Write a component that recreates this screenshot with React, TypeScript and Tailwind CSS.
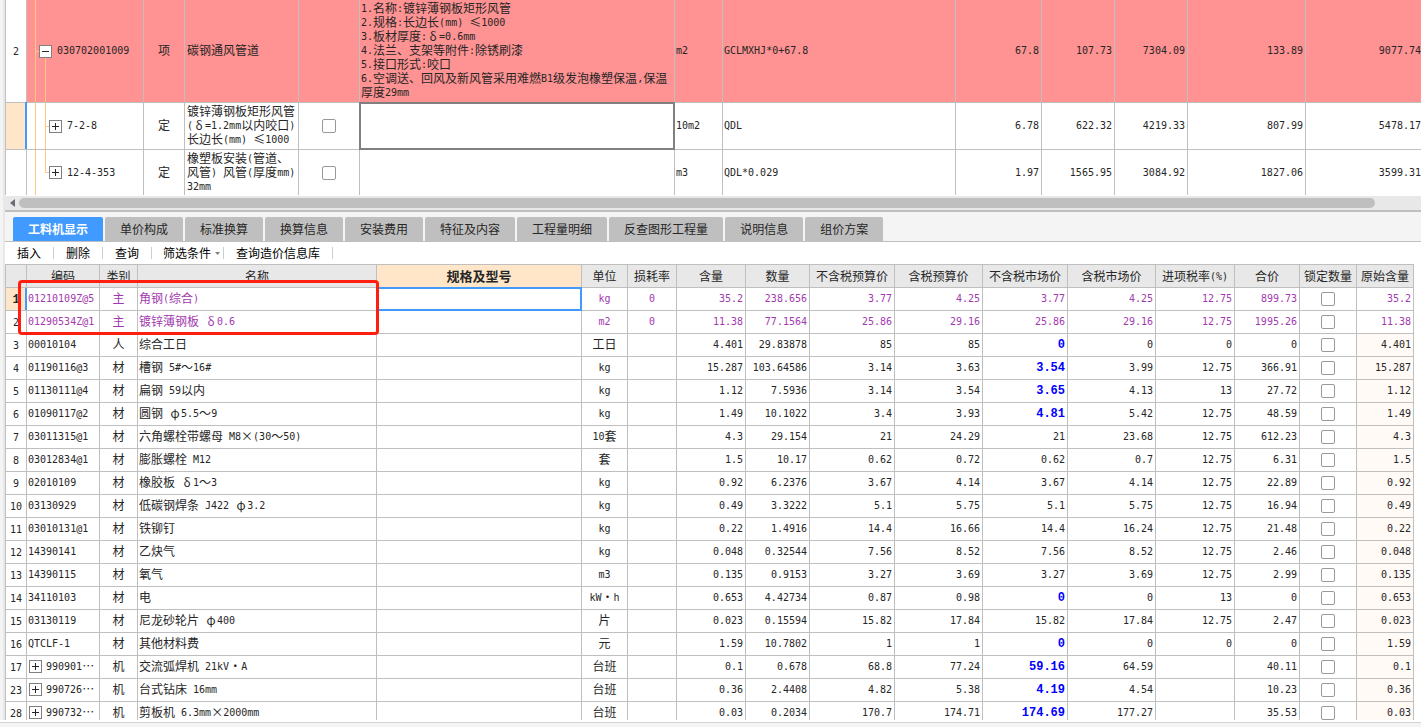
import type { ReactNode } from 'react';
import clsx from 'clsx';

interface Material {
  no: number;
  code: string;
  kind: string;
  name: string;
  unit: string;
  loss?: string;
  // 含量, 数量, 不含税预算价, 含税预算价, 不含税市场价, 含税市场价, 进项税率, 合价, 原始含量
  values: string[];
  main?: boolean;
  adjusted?: boolean;
  group?: boolean;
}

const materials: Material[] = [
  { no: 1, code: '01210109Z@5', kind: '主', name: '角钢(综合)', unit: 'kg', loss: '0', main: true, values: ['35.2', '238.656', '3.77', '4.25', '3.77', '4.25', '12.75', '899.73', '35.2'] },
  { no: 2, code: '01290534Z@1', kind: '主', name: '镀锌薄钢板 δ0.6', unit: 'm2', loss: '0', main: true, values: ['11.38', '77.1564', '25.86', '29.16', '25.86', '29.16', '12.75', '1995.26', '11.38'] },
  { no: 3, code: '00010104', kind: '人', name: '综合工日', unit: '工日', adjusted: true, values: ['4.401', '29.83878', '85', '85', '0', '0', '0', '0', '4.401'] },
  { no: 4, code: '01190116@3', kind: '材', name: '槽钢 5#～16#', unit: 'kg', adjusted: true, values: ['15.287', '103.64586', '3.14', '3.63', '3.54', '3.99', '12.75', '366.91', '15.287'] },
  { no: 5, code: '01130111@4', kind: '材', name: '扁钢 59以内', unit: 'kg', adjusted: true, values: ['1.12', '7.5936', '3.14', '3.54', '3.65', '4.13', '13', '27.72', '1.12'] },
  { no: 6, code: '01090117@2', kind: '材', name: '圆钢 φ5.5～9', unit: 'kg', adjusted: true, values: ['1.49', '10.1022', '3.4', '3.93', '4.81', '5.42', '12.75', '48.59', '1.49'] },
  { no: 7, code: '03011315@1', kind: '材', name: '六角螺栓带螺母 M8×(30～50)', unit: '10套', values: ['4.3', '29.154', '21', '24.29', '21', '23.68', '12.75', '612.23', '4.3'] },
  { no: 8, code: '03012834@1', kind: '材', name: '膨胀螺栓 M12', unit: '套', values: ['1.5', '10.17', '0.62', '0.72', '0.62', '0.7', '12.75', '6.31', '1.5'] },
  { no: 9, code: '02010109', kind: '材', name: '橡胶板 δ1～3', unit: 'kg', values: ['0.92', '6.2376', '3.67', '4.14', '3.67', '4.14', '12.75', '22.89', '0.92'] },
  { no: 10, code: '03130929', kind: '材', name: '低碳钢焊条 J422 φ3.2', unit: 'kg', values: ['0.49', '3.3222', '5.1', '5.75', '5.1', '5.75', '12.75', '16.94', '0.49'] },
  { no: 11, code: '03010131@1', kind: '材', name: '铁铆钉', unit: 'kg', values: ['0.22', '1.4916', '14.4', '16.66', '14.4', '16.24', '12.75', '21.48', '0.22'] },
  { no: 12, code: '14390141', kind: '材', name: '乙炔气', unit: 'kg', values: ['0.048', '0.32544', '7.56', '8.52', '7.56', '8.52', '12.75', '2.46', '0.048'] },
  { no: 13, code: '14390115', kind: '材', name: '氧气', unit: 'm3', values: ['0.135', '0.9153', '3.27', '3.69', '3.27', '3.69', '12.75', '2.99', '0.135'] },
  { no: 14, code: '34110103', kind: '材', name: '电', unit: 'kW·h', adjusted: true, values: ['0.653', '4.42734', '0.87', '0.98', '0', '0', '13', '0', '0.653'] },
  { no: 15, code: '03130119', kind: '材', name: '尼龙砂轮片 φ400', unit: '片', values: ['0.023', '0.15594', '15.82', '17.84', '15.82', '17.84', '12.75', '2.47', '0.023'] },
  { no: 16, code: 'QTCLF-1', kind: '材', name: '其他材料费', unit: '元', adjusted: true, values: ['1.59', '10.7802', '1', '1', '0', '0', '0', '0', '1.59'] },
  { no: 17, code: '990901⋯', kind: '机', name: '交流弧焊机 21kV·A', unit: '台班', adjusted: true, group: true, values: ['0.1', '0.678', '68.8', '77.24', '59.16', '64.59', '', '40.11', '0.1'] },
  { no: 23, code: '990726⋯', kind: '机', name: '台式钻床 16mm', unit: '台班', adjusted: true, group: true, values: ['0.36', '2.4408', '4.82', '5.38', '4.19', '4.54', '', '10.23', '0.36'] },
  { no: 28, code: '990732⋯', kind: '机', name: '剪板机 6.3mm×2000mm', unit: '台班', adjusted: true, group: true, values: ['0.03', '0.2034', '170.7', '174.71', '174.69', '177.27', '', '35.53', '0.03'] },
];

const headers = ['', '编码', '类别', '名称', '规格及型号', '单位', '损耗率', '含量', '数量', '不含税预算价', '含税预算价', '不含税市场价', '含税市场价', '进项税率(%)', '合价', '锁定数量', '原始含量'];

const tabs = ['工料机显示', '单价构成', '标准换算', '换算信息', '安装费用', '特征及内容', '工程量明细', '反查图形工程量', '说明信息', '组价方案'];

const tools = ['插入', '删除', '查询', '筛选条件', '查询造价信息库'];

const feature = [
  '1.名称:镀锌薄钢板矩形风管',
  '2.规格:长边长(mm) ≤1000',
  '3.板材厚度:δ=0.6mm',
  '4.法兰、支架等附件:除锈刷漆',
  '5.接口形式:咬口',
  '6.空调送、回风及新风管采用难燃B1级发泡橡塑保温,保温厚度29mm',
].join('\n');

const box = 'border-r border-b border-[#bfbfbf] align-middle font-normal';
const cell = `${box} px-0 pt-0 pb-0.5`;

// Latin runs are set in a half-width face so that two of them fill one CJK cell,
// Greek letters and the middle dot take a full cell
function Mixed({ children, bold }: { children: string; bold?: boolean }) {
  return (
    <>
      {children.split(/([\x20-\x7e]+|[δφ·])/).map((part, i) => {
        if (i % 2 === 0) return part;
        if (/[δφ·]/.test(part)) {
          return (
            <span key={i} className="inline-block w-3 text-center leading-none">
              {part}
            </span>
          );
        }
        return (
          <span
            key={i}
            className={
              bold
                ? "align-[1px] font-['Liberation_Mono',monospace] text-[12px] leading-none font-bold"
                : "align-[1px] font-['DejaVu_Sans_Mono',monospace] text-[10px] leading-none"
            }
          >
            {part}
          </span>
        );
      })}
    </>
  );
}

function Toggle({ open, label }: { open?: boolean; label: string }) {
  return (
    <button type="button" aria-label={label} className="relative block size-[13px] shrink-0 bg-white">
      <svg viewBox="0 0 13 13" className="size-[13px]" fill="none" shapeRendering="crispEdges">
        <rect x="0.5" y="0.5" width="12" height="12" stroke="#808080" />
        <path d={open ? 'M3 6.5h7' : 'M3 6.5h7M6.5 3v7'} stroke="#262626" />
      </svg>
    </button>
  );
}

function Check({ label }: { label: string }) {
  return (
    <input
      type="checkbox"
      aria-label={label}
      className="mx-auto block size-3.5 appearance-none rounded-xs border border-[#999999] bg-white"
    />
  );
}

interface BillRowProps {
  no?: string;
  height: string;
  code: ReactNode;
  kind: string;
  name: string;
  check?: boolean;
  spec?: string;
  unit: string;
  expr: string;
  values: string[];
  main?: boolean;
  active?: boolean;
  last?: boolean;
}

function BillRow({ no, height, code, kind, name, check, spec, unit, expr, values, main, active, last }: BillRowProps) {
  const td = clsx(cell, last && 'border-b-0');
  const plain = clsx(box, 'p-0', last && 'border-b-0');
  return (
    <tr className={clsx(height, main ? 'bg-[#ff9292]' : 'bg-white')}>
      <td className={clsx(plain, 'relative border-l text-center', active ? 'bg-[#ffe6c8]' : 'bg-white')}>
        {no && <Mixed>{no}</Mixed>}
        {active && <span className="absolute -top-px -right-px bottom-0 w-0.5 bg-[#409aff]" />}
      </td>
      <td className={clsx(plain, 'relative')}>{code}</td>
      <td className={clsx(td, 'text-center')}>{kind}</td>
      <td className={clsx(td, 'pl-0.5 whitespace-pre')}>
        <Mixed>{name}</Mixed>
      </td>
      <td className={plain}>{check && <Check label={`${name} 选择`} />}</td>
      <td className={clsx(td, 'relative pl-px whitespace-pre-line')}>
        {spec && <Mixed>{spec}</Mixed>}
        {active && <span className="absolute -inset-px border-2 border-[#808080]" />}
      </td>
      <td className={clsx(td, 'pl-px')}>
        <Mixed>{unit}</Mixed>
      </td>
      <td className={clsx(td, 'pl-px')}>
        <Mixed>{expr}</Mixed>
      </td>
      {values.map((v, i) => (
        <td key={i} className={clsx(td, 'text-right', i === values.length - 1 ? 'border-r-0' : 'pr-0.5')}>
          <Mixed>{v}</Mixed>
        </td>
      ))}
    </tr>
  );
}

function BillTable() {
  return (
    <table className="w-full table-fixed border-separate border-spacing-0 leading-[14px]">
      <colgroup>
        <col className="w-[22px]" />
        <col className="w-[117px]" />
        <col className="w-[41px]" />
        <col className="w-[114px]" />
        <col className="w-[61px]" />
        <col className="w-[315px]" />
        <col className="w-[48px]" />
        <col />
        <col className="w-[86px]" />
        <col className="w-[73px]" />
        <col className="w-[73px]" />
        <col className="w-[118px]" />
        <col className="w-[115px]" />
      </colgroup>
      <tbody>
        <BillRow
          main
          no="2"
          height="h-[103px]"
          code={
            <>
              <svg className="absolute inset-0 size-full" stroke="#ffc880" shapeRendering="crispEdges">
                <line x1="8.5" x2="8.5" y1="0" y2="100%" />
                <line x1="8" x2="14" y1="50%" y2="50%" />
                <line x1="18.5" x2="18.5" y1="50%" y2="100%" />
              </svg>
              <div className="flex items-center gap-[5px] pl-3">
                <Toggle open label="折叠 030702001009" />
                <Mixed>030702001009</Mixed>
              </div>
            </>
          }
          kind="项"
          name="碳钢通风管道"
          spec={feature}
          unit="m2"
          expr="GCLMXHJ*0+67.8"
          values={['67.8', '107.73', '7304.09', '133.89', '9077.74']}
        />
        <BillRow
          active
          check
          height="h-[47px]"
          code={
            <>
              <svg className="absolute inset-0 size-full" stroke="#ffc880" shapeRendering="crispEdges">
                <line x1="8.5" x2="8.5" y1="0" y2="100%" />
                <line x1="18.5" x2="18.5" y1="0" y2="100%" />
                <line x1="18" x2="24" y1="50%" y2="50%" />
              </svg>
              <div className="flex items-center gap-[5px] pl-[22px]">
                <Toggle label="展开 7-2-8" />
                <Mixed>7-2-8</Mixed>
              </div>
            </>
          }
          kind="定"
          name={'镀锌薄钢板矩形风管\n(δ=1.2mm以内咬口)\n长边长(mm) ≤1000'}
          unit="10m2"
          expr="QDL"
          values={['6.78', '622.32', '4219.33', '807.99', '5478.17']}
        />
        <BillRow
          last
          check
          height="h-[45px]"
          code={
            <>
              <svg className="absolute inset-0 size-full" stroke="#ffc880" shapeRendering="crispEdges">
                <line x1="8.5" x2="8.5" y1="0" y2="100%" />
                <line x1="18.5" x2="18.5" y1="0" y2="50%" />
                <line x1="18" x2="24" y1="50%" y2="50%" />
              </svg>
              <div className="flex items-center gap-[5px] pl-[22px]">
                <Toggle label="展开 12-4-353" />
                <Mixed>12-4-353</Mixed>
              </div>
            </>
          }
          kind="定"
          name={'橡塑板安装(管道、\n风管) 风管(厚度mm)\n32mm'}
          unit="m3"
          expr="QDL*0.029"
          values={['1.97', '1565.95', '3084.92', '1827.06', '3599.31']}
        />
      </tbody>
    </table>
  );
}

function MaterialRow({ item }: { item: Material }) {
  const first = item.no === 1;
  const number = (i: number) => {
    const strong = i === 4 && item.adjusted;
    return (
      <td key={i} className={clsx(cell, 'pr-0.5 text-right', strong && 'text-[#0000ff]')}>
        <Mixed bold={strong}>{item.values[i]}</Mixed>
      </td>
    );
  };

  return (
    <tr className={clsx('h-[23px]', item.main && 'text-[#a239b0]')}>
      <td className={clsx(box, 'relative border-l p-0 text-center text-[#262626]', first && 'bg-[#ffe6c8]')}>
        <Mixed bold={first}>{String(item.no)}</Mixed>
        {first && <span className="absolute inset-y-0 -right-px w-0.5 bg-[#409aff]" />}
      </td>
      <td className={clsx(cell, item.group ? 'pl-0.5' : 'pl-px')}>
        {item.group ? (
          <div className="flex items-center gap-1">
            <Toggle label={`展开 ${item.code}`} />
            <span>
              <Mixed>{item.code}</Mixed>
            </span>
          </div>
        ) : (
          <Mixed>{item.code}</Mixed>
        )}
      </td>
      <td className={clsx(cell, 'text-center')}>{item.kind}</td>
      <td className={clsx(cell, 'pl-px whitespace-pre')}>
        <Mixed>{item.name}</Mixed>
      </td>
      <td className={clsx(cell, 'relative')}>
        {first && <span className="absolute -inset-px border-2 border-[#409aff]" />}
      </td>
      <td className={clsx(cell, 'text-center')}>
        <Mixed>{item.unit}</Mixed>
      </td>
      <td className={clsx(cell, 'text-center')}>
        <Mixed>{item.loss ?? ''}</Mixed>
      </td>
      {[0, 1, 2, 3, 4, 5, 6, 7].map(number)}
      <td className={clsx(box, 'p-0')}>
        <Check label={`锁定数量 ${item.no}`} />
      </td>
      <td className={clsx(cell, 'pr-0.5 text-right', !item.main && 'bg-[#fffaf5]')}>
        <Mixed>{item.values[8]}</Mixed>
      </td>
    </tr>
  );
}

function MaterialTable() {
  return (
    <table className="w-full table-fixed border-separate border-spacing-0 leading-[14px]">
      <colgroup>
        <col className="w-[22px]" />
        <col className="w-[73px]" />
        <col className="w-[38px]" />
        <col className="w-[239px]" />
        <col />
        <col className="w-[46px]" />
        <col className="w-[49px]" />
        <col className="w-[69px]" />
        <col className="w-[64px]" />
        <col className="w-[85px]" />
        <col className="w-[88px]" />
        <col className="w-[85px]" />
        <col className="w-[88px]" />
        <col className="w-[79px]" />
        <col className="w-[65px]" />
        <col className="w-[57px]" />
        <col className="w-[57px]" />
      </colgroup>
      <thead>
        <tr className="h-6">
          {headers.map((h, i) => (
            <th
              key={i}
              scope="col"
              className={clsx(
                'border-t border-r border-b border-[#bfbfbf] p-0 text-center align-middle whitespace-nowrap first:border-l',
                h === '规格及型号' ? 'bg-[#ffe6c8] text-[13px] font-bold' : 'bg-[#e8e8e8] font-normal'
              )}
            >
              <Mixed>{h}</Mixed>
            </th>
          ))}
        </tr>
      </thead>
      <tbody>
        {materials.map((m) => (
          <MaterialRow key={m.no} item={m} />
        ))}
      </tbody>
    </table>
  );
}

export default function App() {
  return (
    <div className="flex h-screen flex-col overflow-hidden bg-white font-['Noto_Sans_CJK_SC',sans-serif] text-xs text-[#262626]">
      <div className="flex min-h-0 flex-1">
        {/* Left rail */}
        <div className="w-[5px] shrink-0 border-r-2 border-[#e8e8e8] bg-[#f4f4f4]" />

        <main className="flex min-w-0 flex-1 flex-col">
          <BillTable />

          {/* Horizontal scrollbar */}
          <div className="mt-px flex h-4 shrink-0 items-center border-b-2 border-[#bfbfbf] bg-[#e8e8e8] pr-[46px]">
            <button type="button" aria-label="向左滚动" className="flex w-3.5 shrink-0 justify-center">
              <svg viewBox="0 0 5 8" className="h-2 w-[5px]" fill="#6b6b75">
                <path d="M5 0v8L0 4z" />
              </svg>
            </button>
            <div className="h-2.5 flex-1 rounded-full bg-[#bfbfbf]" />
          </div>

          {/* Tabs */}
          <div role="tablist" className="flex h-[30px] shrink-0 items-end gap-0.5 border-b border-[#bfbfbf] bg-[#f4f4f4] pl-2">
            {tabs.map((t, i) => (
              <button
                key={t}
                type="button"
                role="tab"
                aria-selected={i === 0}
                className={clsx(
                  'h-6 rounded-t-xs px-[15px] whitespace-nowrap',
                  i === 0 ? 'bg-[#409aff] font-bold text-white' : 'bg-[#bfbfbf]'
                )}
              >
                {t}
              </button>
            ))}
          </div>

          {/* Toolbar */}
          <div className="flex h-[22px] shrink-0 items-center text-black">
            {tools.map((t) => (
              <div key={t} className="flex items-center">
                <button
                  type="button"
                  className={clsx('flex items-center gap-1 whitespace-nowrap', t === '筛选条件' ? 'pr-[3px] pl-[11px]' : 'px-3')}
                >
                  {t}
                  {t === '筛选条件' && (
                    <svg viewBox="0 0 5 3" className="h-[3px] w-[5px]" fill="#808080">
                      <path d="M0 0h5L2.5 3z" />
                    </svg>
                  )}
                </button>
                <span className="h-3 w-px bg-[#c5d0d4]" />
              </div>
            ))}
          </div>

          <div className="relative min-h-0 flex-1 overflow-hidden pr-[7px]">
            <MaterialTable />
            {/* Annotation frame round the main materials */}
            <div className="pointer-events-none absolute top-4 left-[13px] h-[55px] w-[361px] rounded-sm border-3 border-[#ff1e10]" />
          </div>
        </main>
      </div>

      {/* Bottom edge */}
      <div className="mt-0.5 h-[5px] shrink-0 border-t border-[#d4d4d4] bg-[#f4f4f4]" />
    </div>
  );
}
